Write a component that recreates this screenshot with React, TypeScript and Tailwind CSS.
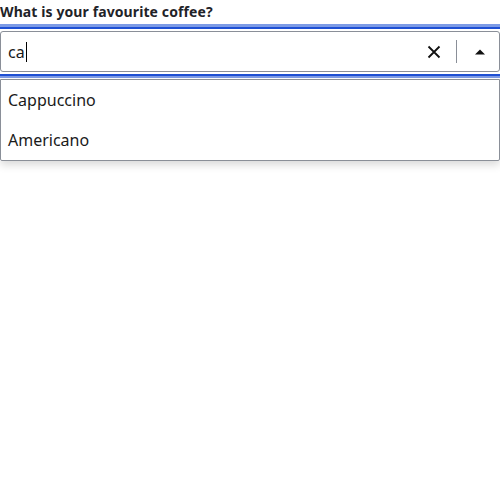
import React from "react";

export default function App() {
  return (
    <div className="w-[500px] h-[500px] bg-white" style={{ fontFamily: '"Noto Sans", "Open Sans", sans-serif' }}>
      <div className="h-[24px] pt-[3px] text-[14px] leading-[18px] font-bold tracking-[0.1px] text-[#1f2328]">
        What is your favourite coffee?
      </div>
      <div className="h-[3px] bg-[#7d9be6]" />
      <div className="h-[2px] bg-[#1f50d4]" />
      <div className="h-[2px]" />
      <div className="h-[41px] border border-[#8a8f98] rounded-[3px] flex items-center">
        <div className="flex-1 pl-[7px] text-[16px] text-[#1a1a1a] flex items-center">
          <span>ca</span>
          <span className="w-px h-[20px] bg-black ml-px" />
        </div>
        <button className="w-[24px] h-[24px] flex items-center justify-center mr-[10px]">
          <svg width="14" height="14" viewBox="0 0 14 14">
            <path d="M1.5 1.5 L12.5 12.5 M12.5 1.5 L1.5 12.5" stroke="#111" strokeWidth="1.8" />
          </svg>
        </button>
        <div className="w-px h-[23px] bg-[#8a8f98]" />
        <div className="w-[42px] pl-[4px] flex items-center justify-center">
          <svg width="10" height="6" viewBox="0 0 10 6">
            <path d="M0 5.5 L5 0.5 L10 5.5 Z" fill="#111" />
          </svg>
        </div>
      </div>
      <div className="h-[2px]" />
      <div className="h-[2px] bg-[#1f50d4]" />
      <div className="h-[2px] bg-[#7d9be6]" />
      <div className="h-[1px]" />
      <div className="border border-[#8a8f98] rounded-b-[2px] shadow-[0_4px_8px_rgba(0,0,0,0.15)] text-[16px] text-[#1a1a1a]">
        <div className="h-[40px] flex items-center pl-[7px]">Cappuccino</div>
        <div className="h-[40px] flex items-center pl-[7px]">Americano</div>
      </div>
    </div>
  );
}
